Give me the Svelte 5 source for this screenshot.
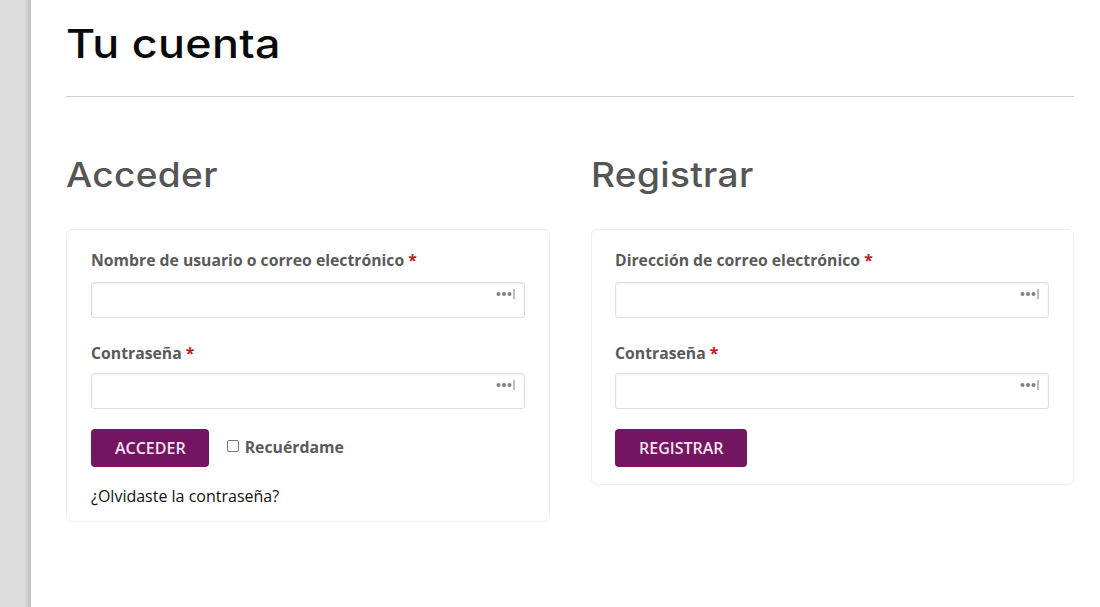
<script>
	const forms = [
		{
			heading: 'Acceder',
			fields: ['Nombre de usuario o correo electrónico', 'Contraseña'],
			button: 'ACCEDER',
			remember: true
		},
		{
			heading: 'Registrar',
			fields: ['Dirección de correo electrónico', 'Contraseña'],
			button: 'REGISTRAR',
			remember: false
		}
	];
</script>

<div class="page">
	<div class="sidebar"></div>
	<main class="content">
		<h1>Tu cuenta</h1>
		<hr />
		<div class="columns">
			{#each forms as form}
				<section>
					<h2>{form.heading}</h2>
					<div class="card" class:short={!form.remember}>
						{#each form.fields as field, i}
							<label class="field-label" class:first={i === 0}>
								{field} <span class="req">*</span>
							</label>
							<div class="input">
								<svg class="dots" width="20" height="10" viewBox="0 0 20 10">
									<circle cx="2.5" cy="5" r="2" />
									<circle cx="8" cy="5" r="2" />
									<circle cx="13.5" cy="5" r="2" />
									<rect x="17.5" y="0" width="1" height="10" />
								</svg>
							</div>
						{/each}
						<div class="actions">
							<button type="button">{form.button}</button>
							{#if form.remember}
								<span class="remember">
									<span class="check"></span>
									Recuérdame
								</span>
							{/if}
						</div>
						{#if form.remember}
							<a class="lost" href="#lost">¿Olvidaste la contraseña?</a>
						{/if}
					</div>
				</section>
			{/each}
		</div>
	</main>
</div>

<style>
	:global(body) {
		margin: 0;
		background: #fff;
	}

	.page {
		display: flex;
		height: 607px;
		overflow: hidden;
		font-family: 'Open Sans', sans-serif;
	}

	.sidebar {
		width: 31px;
		flex: none;
		background: linear-gradient(to right, #dcdcdc 0, #dcdcdc 24px, #bdbdbd 31px);
	}

	.content {
		flex: 1;
		padding: 0 26px 0 35px;
	}

	/* Inter stretched a little, to get near the wide heading face */
	h1 {
		margin: 0;
		padding-top: 20px;
		font-family: Inter, sans-serif;
		font-size: 40px;
		font-weight: 500;
		line-height: 48px;
		letter-spacing: 0.3px;
		color: #0a0a0a;
		transform: scaleX(1.12);
		transform-origin: left;
	}

	hr {
		margin: 28px 0 0;
		border: 0;
		border-top: 1px solid #cfcfcf;
	}

	.columns {
		display: grid;
		grid-template-columns: 484px 483px;
		gap: 41px;
		margin-top: 55px;
	}

	h2 {
		margin: 0;
		font-family: Inter, sans-serif;
		font-size: 34px;
		font-weight: 500;
		line-height: 46px;
		letter-spacing: 0.3px;
		color: #555;
		transform: scaleX(1.09);
		transform-origin: left;
	}

	.card {
		margin-top: 31px;
		padding: 20px 24px 14px;
		border: 1px solid #eee;
		border-radius: 6px;
		background: #fff;
	}

	.card.short {
		padding-left: 23px;
		padding-bottom: 17px;
	}

	.field-label {
		display: block;
		margin-top: 25px;
		margin-bottom: 10px;
		font-size: 15.75px;
		font-weight: 700;
		line-height: 20px;
		color: #5a5a5a;
	}

	.field-label.first {
		margin-top: 0;
		margin-bottom: 12px;
	}

	.req {
		color: #c01818;
	}

	.input {
		position: relative;
		height: 34px;
		border: 1px solid #dfdfdf;
		border-radius: 3px;
		box-shadow: inset 0 1px 2px rgba(0, 0, 0, 0.07);
	}

	.dots {
		position: absolute;
		top: 6px;
		right: 8px;
		fill: #808080;
	}

	.actions {
		display: flex;
		align-items: center;
		margin-top: 20px;
	}

	button {
		height: 38px;
		padding: 0 23px 0 24px;
		border: 0;
		border-radius: 4px;
		background: #731561;
		color: #f3e3ef;
		font-family: 'Open Sans', sans-serif;
		font-size: 16px;
		font-weight: 600;
	}

	.remember {
		display: flex;
		align-items: center;
		gap: 6px;
		margin-left: 18px;
		margin-top: -2px;
		font-size: 15.8px;
		font-weight: 700;
		color: #5a5a5a;
	}

	.check {
		width: 10px;
		height: 10px;
		margin-top: -2px;
		border: 1px solid #767676;
		border-radius: 2px;
		background: #fff;
	}

	.lost {
		display: block;
		margin-top: 18px;
		font-size: 16px;
		line-height: 22px;
		color: #111;
		text-decoration: none;
	}
</style>
